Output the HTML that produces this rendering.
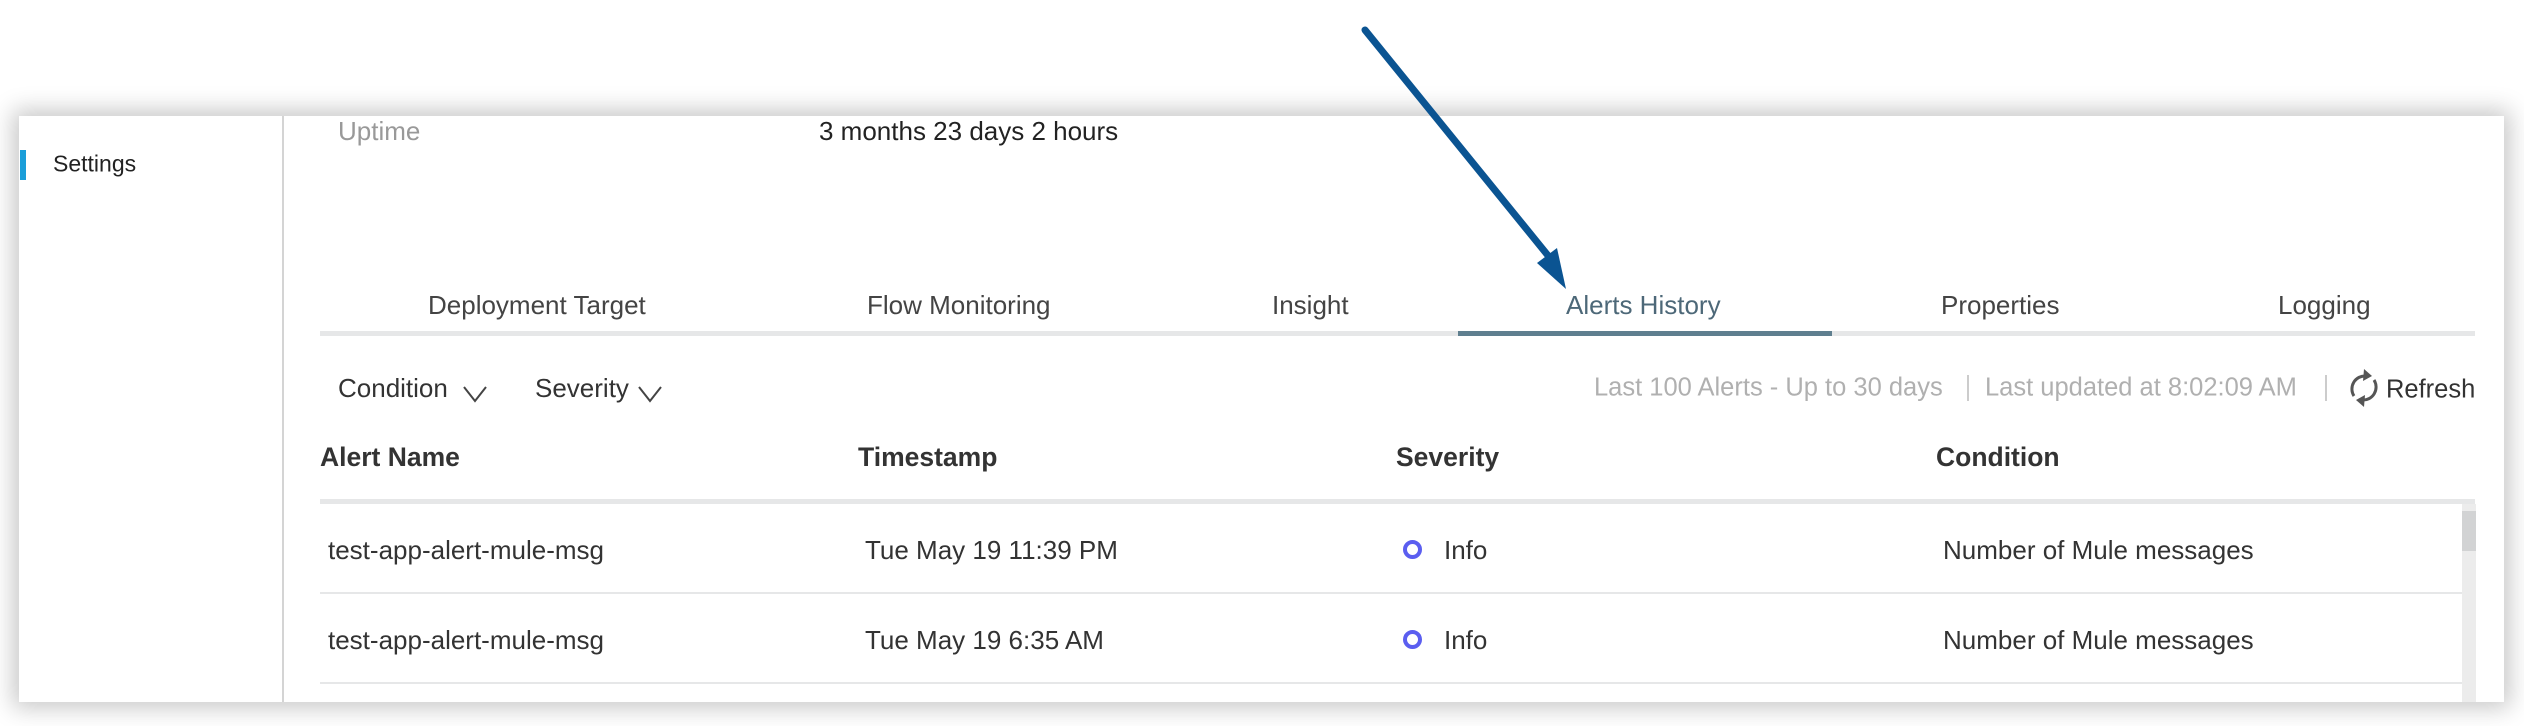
<!DOCTYPE html>
<html><head><meta charset="utf-8"><style>
body{margin:0;width:2524px;height:726px;background:#fff;position:relative;overflow:hidden;font-family:"Liberation Sans",sans-serif;color:#333}
.a{position:absolute;white-space:nowrap;line-height:1}
.panel{position:absolute;left:19px;top:116px;width:2485px;height:586px;background:#fff;box-shadow:0 0 22px 6px rgba(0,0,0,0.22)}
.t{font-size:26px;color:#444;transform:translateY(-50%)}
.b{font-weight:bold;font-size:26.5px;color:#333;transform:translateY(-50%)}
.g{color:#aaa}
.ln{position:absolute;background:#e6e7e8}
.dot{position:absolute;width:11px;height:11px;border:4px solid #5b5ef0;border-radius:50%}
</style></head><body>
<div class="panel"></div>
<div class="ln" style="left:282px;top:116px;width:2px;height:586px;background:#d4d4d4"></div>
<div class="a" style="left:20px;top:150px;width:6px;height:30px;background:#1a9ed9"></div>
<div class="a t" style="left:53px;top:164px;font-size:23px;color:#222">Settings</div>
<div class="a t g" style="left:338px;top:131px;color:#999">Uptime</div>
<div class="a t" style="left:819px;top:131px;color:#222">3 months 23 days 2 hours</div>

<div class="a t" style="left:428px;top:305px">Deployment Target</div>
<div class="a t" style="left:867px;top:305px">Flow Monitoring</div>
<div class="a t" style="left:1272px;top:305px">Insight</div>
<div class="a t" style="left:1566px;top:305px;color:#4d6878">Alerts History</div>
<div class="a t" style="left:1941px;top:305px">Properties</div>
<div class="a t" style="left:2278px;top:305px">Logging</div>
<div class="ln" style="left:320px;top:331px;width:2155px;height:5px"></div>
<div class="ln" style="left:1458px;top:331px;width:374px;height:5px;background:#5f7f8f"></div>

<div class="a t" style="left:338px;top:388px;color:#333">Condition</div>
<svg class="a" style="left:462px;top:384px" width="26" height="20"><path d="M2 3 L13 17 L24 3" fill="none" stroke="#444" stroke-width="2"/></svg>
<div class="a t" style="left:535px;top:388px;color:#333">Severity</div>
<svg class="a" style="left:637px;top:384px" width="26" height="20"><path d="M2 3 L13 17 L24 3" fill="none" stroke="#444" stroke-width="2"/></svg>
<div class="a t g" style="left:1594px;top:388px;font-size:25.5px;color:#b0b0b0">Last 100 Alerts - Up to 30 days</div>
<div class="ln" style="left:1967px;top:375px;width:2px;height:26px;background:#ccc"></div>
<div class="a t g" style="left:1985px;top:388px;font-size:25.5px;color:#b0b0b0">Last updated at 8:02:09 AM</div>
<div class="ln" style="left:2325px;top:375px;width:2px;height:26px;background:#ccc"></div>
<svg class="a" style="left:2346px;top:366px" width="36" height="44" viewBox="0 0 36 44"><g fill="none" stroke="#555" stroke-width="3"><path d="M8 30 A13 13 0 0 1 20 10"/><path d="M28 14 A13 13 0 0 1 16 34"/></g><path d="M18 3 L26 10 L17 15 Z" fill="#555"/><path d="M18 41 L10 34 L19 29 Z" fill="#555"/></svg>
<div class="a t" style="left:2386px;top:390px;color:#333;font-size:25.5px">Refresh</div>

<div class="a b" style="left:320px;top:457px">Alert Name</div>
<div class="a b" style="left:858px;top:457px">Timestamp</div>
<div class="a b" style="left:1396px;top:457px">Severity</div>
<div class="a b" style="left:1936px;top:457px">Condition</div>
<div class="ln" style="left:320px;top:499px;width:2155px;height:5px"></div>
<div class="ln" style="left:2462px;top:504px;width:14px;height:198px;background:#ececec"></div>
<div class="ln" style="left:2462px;top:511px;width:14px;height:40px;background:#d2d3d4"></div>

<div class="a t" style="left:328px;top:550px;color:#333">test-app-alert-mule-msg</div>
<div class="a t" style="left:865px;top:550px;color:#333">Tue May 19 11:39 PM</div>
<div class="dot" style="left:1403px;top:540px"></div>
<div class="a t" style="left:1444px;top:550px;color:#333">Info</div>
<div class="a t" style="left:1943px;top:550px;color:#333">Number of Mule messages</div>
<div class="ln" style="left:320px;top:592px;width:2142px;height:2px"></div>

<div class="a t" style="left:328px;top:640px;color:#333">test-app-alert-mule-msg</div>
<div class="a t" style="left:865px;top:640px;color:#333">Tue May 19 6:35 AM</div>
<div class="dot" style="left:1403px;top:630px"></div>
<div class="a t" style="left:1444px;top:640px;color:#333">Info</div>
<div class="a t" style="left:1943px;top:640px;color:#333">Number of Mule messages</div>
<div class="ln" style="left:320px;top:682px;width:2142px;height:2px"></div>

<svg class="a" style="left:0;top:0" width="2524" height="726"><line x1="1365" y1="30" x2="1550" y2="258" stroke="#0b5492" stroke-width="7" stroke-linecap="round"/><path d="M1566 289 L1537 263 L1557 248 Z" fill="#0b5492"/></svg>
</body></html>
